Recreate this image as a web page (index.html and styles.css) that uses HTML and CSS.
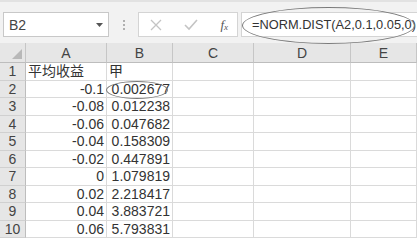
FILE: index.html
```html
<!DOCTYPE html>
<html lang="zh">
<head>
    <meta charset="UTF-8">
    <title>NORM.DIST</title>
    <link rel="stylesheet" href="styles.css">
</head>
<body>
    <div class="toolbar">
        <div class="name-box">
            <span>B2</span>
            <svg class="drop" width="7" height="4" viewBox="0 0 7 4"><path d="M0 0h7L3.5 4z" fill="#555"/></svg>
        </div>
        <div class="grip"><i></i><i></i><i></i></div>
        <div class="fx-buttons">
            <svg width="12" height="12" viewBox="0 0 12 12"><path d="M1 1l10 10M11 1L1 11" stroke="#c4c4c4" stroke-width="1.3" fill="none"/></svg>
            <svg width="14" height="12" viewBox="0 0 14 12"><path d="M1 6l4 4 8-9" stroke="#c4c4c4" stroke-width="1.6" fill="none"/></svg>
            <span class="fx"><i>f</i><sub>x</sub></span>
        </div>
        <div class="formula">=NORM.DIST(A2,0.1,0.05,0)</div>
        <div class="mark mark-formula"></div>
    </div>

    <div class="sheet">
        <div class="corner"><span></span></div>
        <div class="col-head">A</div>
        <div class="col-head">B</div>
        <div class="col-head">C</div>
        <div class="col-head">D</div>
        <div class="col-head">E</div>

        <div class="row-head">1</div><div class="cell">平均收益</div><div class="cell">甲</div><div class="cell"></div><div class="cell"></div><div class="cell"></div>
        <div class="row-head">2</div><div class="cell num">-0.1</div><div class="cell num b2">0.002677<span class="mark mark-cell"></span></div><div class="cell"></div><div class="cell"></div><div class="cell"></div>
        <div class="row-head">3</div><div class="cell num">-0.08</div><div class="cell num">0.012238</div><div class="cell"></div><div class="cell"></div><div class="cell"></div>
        <div class="row-head">4</div><div class="cell num">-0.06</div><div class="cell num">0.047682</div><div class="cell"></div><div class="cell"></div><div class="cell"></div>
        <div class="row-head">5</div><div class="cell num">-0.04</div><div class="cell num">0.158309</div><div class="cell"></div><div class="cell"></div><div class="cell"></div>
        <div class="row-head">6</div><div class="cell num">-0.02</div><div class="cell num">0.447891</div><div class="cell"></div><div class="cell"></div><div class="cell"></div>
        <div class="row-head">7</div><div class="cell num">0</div><div class="cell num">1.079819</div><div class="cell"></div><div class="cell"></div><div class="cell"></div>
        <div class="row-head">8</div><div class="cell num">0.02</div><div class="cell num">2.218417</div><div class="cell"></div><div class="cell"></div><div class="cell"></div>
        <div class="row-head">9</div><div class="cell num">0.04</div><div class="cell num">3.883721</div><div class="cell"></div><div class="cell"></div><div class="cell"></div>
        <div class="row-head">10</div><div class="cell num">0.06</div><div class="cell num">5.793831</div><div class="cell"></div><div class="cell"></div><div class="cell"></div>
    </div>
</body>
</html>
```

FILE: styles.css
```css
* {
    box-sizing: border-box;
}
body {
    margin: 0;
    width: 417px;
    height: 241px;
    overflow: hidden;
    background: #fff;
    font-family: "Liberation Sans", "Noto Sans CJK SC", sans-serif;
    color: #333;
}
.toolbar {
    position: relative;
    height: 43px;
    background: #f2f2f2;
    border-top: 2px solid #e2e2e2;
    display: flex;
    align-items: flex-start;
    padding: 10px 0 0 3px;
}
.name-box {
    width: 106px;
    height: 25px;
    background: #fff;
    border: 1px solid #c8c8c8;
    display: flex;
    align-items: center;
    justify-content: space-between;
    padding: 0 5px 0 5px;
    font-size: 14px;
    color: #444;
}
.grip {
    width: 29px;
    height: 25px;
    display: flex;
    flex-direction: column;
    align-items: center;
    justify-content: center;
    gap: 2px;
}
.grip i {
    width: 2px;
    height: 2px;
    background: #b0b0b0;
}
.fx-buttons {
    width: 100px;
    height: 25px;
    background: #fff;
    border: 1px solid #d4d4d4;
    display: flex;
    align-items: center;
    justify-content: space-between;
    padding: 0 9px 0 11px;
}
.fx {
    font-family: "Liberation Serif", serif;
    font-size: 13px;
    color: #555;
}
.fx sub {
    font-size: 9px;
    font-style: italic;
    vertical-align: -1px;
}
.formula {
    flex: 1;
    height: 25px;
    margin-left: 3px;
    background: #fff;
    border: 1px solid #d4d4d4;
    border-right: none;
    padding-left: 10px;
    font-size: 12.8px;
    line-height: 23px;
    color: #333;
    white-space: nowrap;
}
.mark {
    position: absolute;
    border: 1px solid #7a7a7a;
    border-radius: 50%;
    pointer-events: none;
}
.mark-formula {
    left: 242px;
    top: 5px;
    width: 173px;
    height: 37px;
    z-index: 2;
}
.mark-cell {
    left: -1px;
    top: 0;
    width: 62px;
    height: 18px;
}
.sheet {
    display: grid;
    grid-template-columns: 26px 81px 66px 81px 97px 1fr;
    grid-template-rows: 20px repeat(10, 17.5px);
    font-size: 14px;
}
.corner {
    background: #e6e6e6;
    border-right: 1px solid #c6c6c6;
    border-bottom: 1px solid #bdbdbd;
    position: relative;
}
.corner span {
    position: absolute;
    right: 3px;
    bottom: 3px;
    width: 0;
    height: 0;
    border-left: 10px solid transparent;
    border-bottom: 10px solid #b8b8b8;
}
.col-head {
    background: #e6e6e6;
    border-right: 1px solid #c6c6c6;
    border-bottom: 1px solid #bdbdbd;
    text-align: center;
    font-size: 14px;
    line-height: 21px;
    color: #444;
}
.row-head {
    background: #e6e6e6;
    border-right: 1px solid #bdbdbd;
    border-bottom: 1px solid #d0d0d0;
    text-align: center;
    font-size: 14px;
    line-height: 17px;
    color: #444;
}
.cell {
    border-right: 1px solid #dadada;
    border-bottom: 1px solid #dadada;
    padding: 0 2px;
    line-height: 17px;
    white-space: nowrap;
    color: #333;
}
.num {
    text-align: right;
}
.b2 {
    position: relative;
}
```
